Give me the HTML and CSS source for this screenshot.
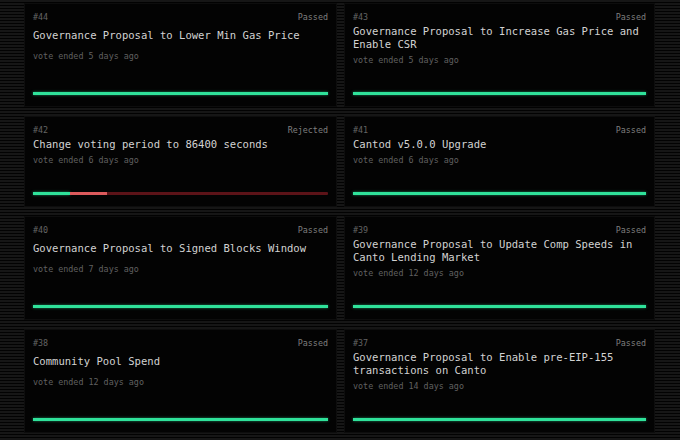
FILE: index.html
```html
<!DOCTYPE html>
<html>
<head>
<meta charset="utf-8">
<link rel="stylesheet" href="styles.css">
</head>
<body>
<main class="page">
  <div class="grid">
    <article class="card">
      <div class="head"><span class="id">#44</span><span class="status">Passed</span></div>
      <h2 class="title">Governance Proposal to Lower Min Gas Price</h2>
      <p class="meta">vote ended 5 days ago</p>
      <div class="bar"><span class="yes" style="width:100%"></span></div>
    </article>
    <article class="card">
      <div class="head"><span class="id">#43</span><span class="status">Passed</span></div>
      <h2 class="title">Governance Proposal to Increase Gas Price and Enable CSR</h2>
      <p class="meta">vote ended 5 days ago</p>
      <div class="bar"><span class="yes" style="width:100%"></span></div>
    </article>
    <article class="card">
      <div class="head"><span class="id">#42</span><span class="status">Rejected</span></div>
      <h2 class="title">Change voting period to 86400 seconds</h2>
      <p class="meta">vote ended 6 days ago</p>
      <div class="bar failed"><span class="yes" style="width:12.5%"></span><span class="no" style="width:12.5%"></span></div>
    </article>
    <article class="card">
      <div class="head"><span class="id">#41</span><span class="status">Passed</span></div>
      <h2 class="title">Cantod v5.0.0 Upgrade</h2>
      <p class="meta">vote ended 6 days ago</p>
      <div class="bar"><span class="yes" style="width:100%"></span></div>
    </article>
    <article class="card">
      <div class="head"><span class="id">#40</span><span class="status">Passed</span></div>
      <h2 class="title">Governance Proposal to Signed Blocks Window</h2>
      <p class="meta">vote ended 7 days ago</p>
      <div class="bar"><span class="yes" style="width:100%"></span></div>
    </article>
    <article class="card">
      <div class="head"><span class="id">#39</span><span class="status">Passed</span></div>
      <h2 class="title">Governance Proposal to Update Comp Speeds in Canto Lending Market</h2>
      <p class="meta">vote ended 12 days ago</p>
      <div class="bar"><span class="yes" style="width:100%"></span></div>
    </article>
    <article class="card">
      <div class="head"><span class="id">#38</span><span class="status">Passed</span></div>
      <h2 class="title">Community Pool Spend</h2>
      <p class="meta">vote ended 12 days ago</p>
      <div class="bar"><span class="yes" style="width:100%"></span></div>
    </article>
    <article class="card">
      <div class="head"><span class="id">#37</span><span class="status">Passed</span></div>
      <h2 class="title">Governance Proposal to Enable pre-EIP-155 transactions on Canto</h2>
      <p class="meta">vote ended 14 days ago</p>
      <div class="bar"><span class="yes" style="width:100%"></span></div>
    </article>
  </div>
</main>
</body>
</html>
```

FILE: styles.css
```css
html, body {
  margin: 0;
  padding: 0;
}
body {
  width: 680px;
  height: 440px;
  overflow: hidden;
  background-color: #000;
  background-image: repeating-linear-gradient(to bottom, #161616 0, #161616 2px, #020202 2px, #020202 3px);
  font-family: "DejaVu Sans Mono", "Liberation Mono", monospace;
}
.page {
  padding: 3px 25px 0 24px;
}
.grid {
  display: grid;
  grid-template-columns: 313px 311px;
  column-gap: 7px;
  row-gap: 9px;
}
.card {
  background: #030303;
  border: 1px solid #0d0d0d;
  padding: 8px 8px 11px 8px;
  display: flex;
  flex-direction: column;
  justify-content: space-between;
}
.head {
  display: flex;
  justify-content: space-between;
  font-size: 8.4px;
  line-height: 11px;
  color: #646464;
}
.status {
  color: #7e7e7e;
}
.title {
  margin: 2px 0 0 0;
  font-size: 10.55px;
  line-height: 13px;
  font-weight: normal;
  color: #d2d2d2;
}
.meta {
  margin: 4px 0 0 0;
  font-size: 8.4px;
  line-height: 11px;
  color: #606060;
}
.bar {
  margin-top: 26px;
  height: 3px;
  display: flex;
  border-radius: 1px;
}
.bar .yes {
  display: block;
  height: 100%;
  background: #2fe29a;
  box-shadow: 0 0 3px rgba(47, 226, 154, 0.55);
}
.bar.failed {
  background: #5c1318;
}
.bar .no {
  display: block;
  height: 100%;
  background: #dc5a5c;
}
```
